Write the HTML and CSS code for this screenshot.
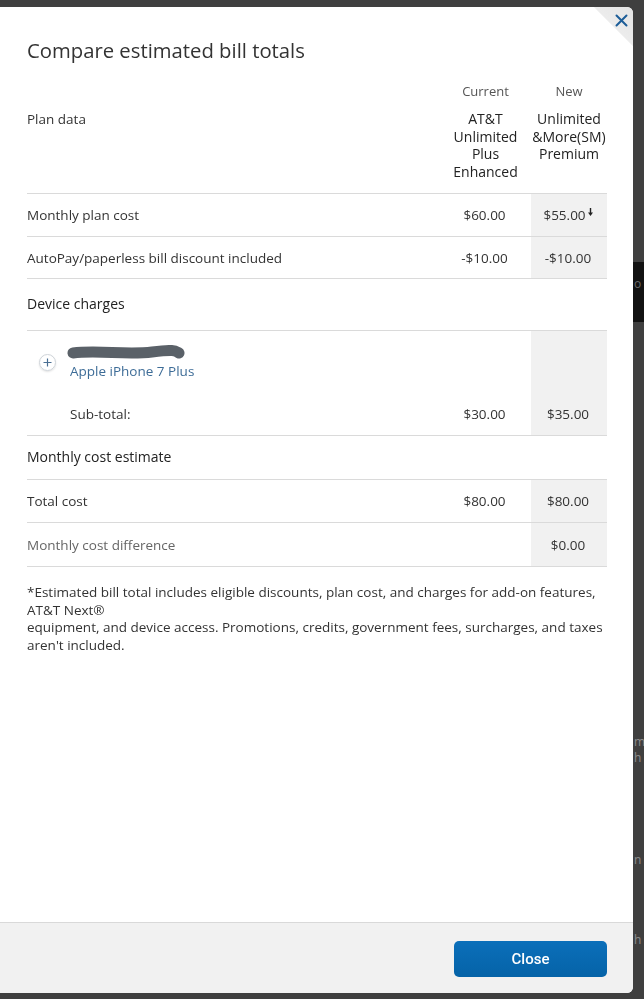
FILE: index.html
```html
<!DOCTYPE html>
<html lang="en">
<head>
<meta charset="utf-8">
<title>Compare estimated bill totals</title>
<link rel="stylesheet" href="styles.css">
</head>
<body>
<div class="behind">
  <div class="behind-bar">o</div>
  <div class="behind-text">
    <p class="b1">m</p>
    <p class="b2">h</p>
    <p class="b3">n</p>
    <p class="b4">h</p>
  </div>
</div>

<div class="modal" role="dialog" aria-labelledby="dlg-title">
  <div class="fold"></div>
  <button class="x-btn" aria-label="Close">
    <svg width="13" height="13" viewBox="0 0 13 13"><path d="M1.5 1.5 L11.5 11.5 M11.5 1.5 L1.5 11.5" stroke="#1c5d98" stroke-width="2" stroke-linecap="round" fill="none"/></svg>
  </button>

  <div class="modal-body">
    <h1 id="dlg-title" class="title">Compare estimated bill totals</h1>

    <div class="grid head">
      <div></div>
      <div class="col-label">Current</div>
      <div class="col-label">New</div>
      <div class="plan-label">Plan data</div>
      <div class="plan-name">AT&amp;T Unlimited Plus Enhanced</div>
      <div class="plan-name">Unlimited &amp;More(SM) Premium</div>
    </div>

    <div class="grid row r1">
      <div class="label">Monthly plan cost</div>
      <div class="val">$60.00</div>
      <div class="val gray">$55.00<svg class="down" width="5" height="8" viewBox="0 0 5 8"><path d="M2.5 0 V6" stroke="#222" stroke-width="1.4"/><path d="M0 4.5 L2.5 8 L5 4.5 Z" fill="#222"/></svg></div>
    </div>
    <div class="grid row">
      <div class="label">AutoPay/paperless bill discount included</div>
      <div class="val">-$10.00</div>
      <div class="val gray">-$10.00</div>
    </div>

    <div class="section s-device">Device charges</div>

    <div class="grid device">
      <div class="device-cell">
        <span class="plus">
          <svg width="9" height="9" viewBox="0 0 9 9"><path d="M4.5 0.5 V8.5 M0.5 4.5 H8.5" stroke="#4a6f93" stroke-width="1.2" fill="none"/></svg>
        </span>
        <div class="device-info">
          <svg class="redact" width="118" height="15" viewBox="0 0 118 15"><path d="M6 8 C 30 5, 60 10, 85 7 S 108 6, 112 8" stroke="#5a6168" stroke-width="11" stroke-linecap="round" fill="none"/></svg>
          <a class="device-link" href="#">Apple iPhone 7 Plus</a>
        </div>
      </div>
      <div></div>
      <div class="gray"></div>
    </div>
    <div class="grid row subtotal">
      <div class="label indent">Sub-total:</div>
      <div class="val">$30.00</div>
      <div class="val gray">$35.00</div>
    </div>

    <div class="section s-estimate">Monthly cost estimate</div>

    <div class="grid row tall first">
      <div class="label">Total cost</div>
      <div class="val">$80.00</div>
      <div class="val gray">$80.00</div>
    </div>
    <div class="grid row tall">
      <div class="label muted">Monthly cost difference</div>
      <div class="val"></div>
      <div class="val gray muted">$0.00</div>
    </div>

    <p class="note">*Estimated bill total includes eligible discounts, plan cost, and charges for add-on features, AT&amp;T Next®<br>equipment, and device access. Promotions, credits, government fees, surcharges, and taxes aren't included.</p>
  </div>

  <div class="modal-footer">
    <button class="close-btn">Close</button>
  </div>
</div>
</body>
</html>
```

FILE: styles.css
```css
* { box-sizing: border-box; }

html, body {
  margin: 0;
  height: 100%;
}

body {
  background: #3f3f3f;
  font-family: "Open Sans", Lato, Arial, sans-serif;
  color: #333;
  overflow: hidden;
}

/* page behind the overlay */
.behind {
  padding-top: 262px;
  font-size: 12px;
}
.behind-bar {
  height: 60px;
  background: #121212;
  color: #6a6a6a;
  padding: 14px 0 0 634px;
  line-height: 16px;
}
.behind-text {
  padding-left: 634px;
  color: #8c8c8c;
}
.behind-text p { margin: 0; line-height: 14px; }
.behind-text .b1 { margin-top: 413px; }
.behind-text .b2 { margin-top: 2px; }
.behind-text .b3 { margin-top: 88px; }
.behind-text .b4 { margin-top: 66px; }

/* modal */
.modal {
  position: fixed;
  left: 0;
  top: 7px;
  width: 633px;
  height: 986px;
  background: #fff;
  border-radius: 0 6px 6px 0;
  display: flex;
  flex-direction: column;
  overflow: hidden;
}

.fold {
  position: absolute;
  top: 0;
  right: 0;
  width: 40px;
  height: 40px;
  background: linear-gradient(to bottom left, #e4e4e4 0%, #ececec 48%, rgba(255,255,255,0) 50%);
}

.x-btn {
  position: absolute;
  top: 2px;
  right: 1px;
  width: 22px;
  height: 22px;
  padding: 0;
  border: 0;
  background: transparent;
  display: flex;
  align-items: center;
  justify-content: center;
  cursor: pointer;
}

.modal-body {
  flex: 1;
  padding: 29px 26px 0 27px;
}

.title {
  margin: 0;
  font-size: 20.3px;
  line-height: 28px;
  font-weight: 400;
  color: #333;
}

.grid {
  display: grid;
  grid-template-columns: 1fr 91px 76px;
}

.head {
  margin-top: 18px;
  border-bottom: 1px solid #dadada;
  padding-bottom: 12px;
  font-size: 13px;
}
.col-label {
  text-align: center;
  color: #555;
  line-height: 18px;
  margin-bottom: 10px;
}
.plan-label {
  color: #333;
  font-size: 13.5px;
  line-height: 18px;
}
.plan-name {
  text-align: center;
  font-size: 14px;
  line-height: 17.7px;
  color: #222;
}

.row {
  height: 42px;
  border-bottom: 1px solid #dadada;
  font-size: 13.5px;
}
.row.r1 { height: 43px; }
.row.tall { height: 44px; }
.row.first { border-top: 1px solid #dadada; height: 44px; }
.row > div {
  display: flex;
  align-items: center;
  padding-top: 1px;
}
.label { color: #333; }
.label.indent { padding-left: 43px; }
.muted { color: #666; }
.val {
  justify-content: center;
  color: #333;
  padding-right: 2px;
}
.gray { background: #f1f1f1; }
.down { margin-left: 2px; margin-top: -6px; }

.section {
  font-size: 14px;
  line-height: 20px;
  font-weight: 500;
  color: #222;
}
.s-device { height: 51px; padding-top: 15px; }
.s-estimate { height: 43px; padding-top: 11px; }

.device {
  border-top: 1px solid #dadada;
  height: 63px;
}
.device-cell {
  display: flex;
  align-items: flex-start;
  padding-top: 14px;
}
.plus {
  width: 17px;
  height: 17px;
  margin: 9px 0 0 12px;
  border-radius: 50%;
  border: 1px solid #cfd4d9;
  box-shadow: 0 1px 2px rgba(0,0,0,0.12);
  display: flex;
  align-items: center;
  justify-content: center;
  flex: none;
}
.device-info {
  margin-left: 14px;
  display: flex;
  flex-direction: column;
}
.redact { display: block; margin-left: -3px; }
.device-link {
  color: #3d6c97;
  text-decoration: none;
  font-size: 13.5px;
  line-height: 16px;
  margin-top: 3px;
}

.subtotal { height: 43px; }
.subtotal > div { padding-top: 0; }

.note {
  margin: 17px 0 0;
  font-size: 13.5px;
  line-height: 17.7px;
  color: #333;
}

.modal-footer {
  height: 71px;
  flex: none;
  background: #f1f1f1;
  border-top: 1px solid #d9d9d9;
  display: flex;
  justify-content: flex-end;
  align-items: flex-start;
  padding: 18px 26px 0 0;
}
.close-btn {
  width: 153px;
  height: 36px;
  border: 0;
  border-radius: 5px;
  background: linear-gradient(#0b6fba, #0563a8);
  color: #fff;
  font-family: Roboto, Arial, sans-serif;
  font-weight: 500;
  font-size: 15px;
  cursor: pointer;
}
```
